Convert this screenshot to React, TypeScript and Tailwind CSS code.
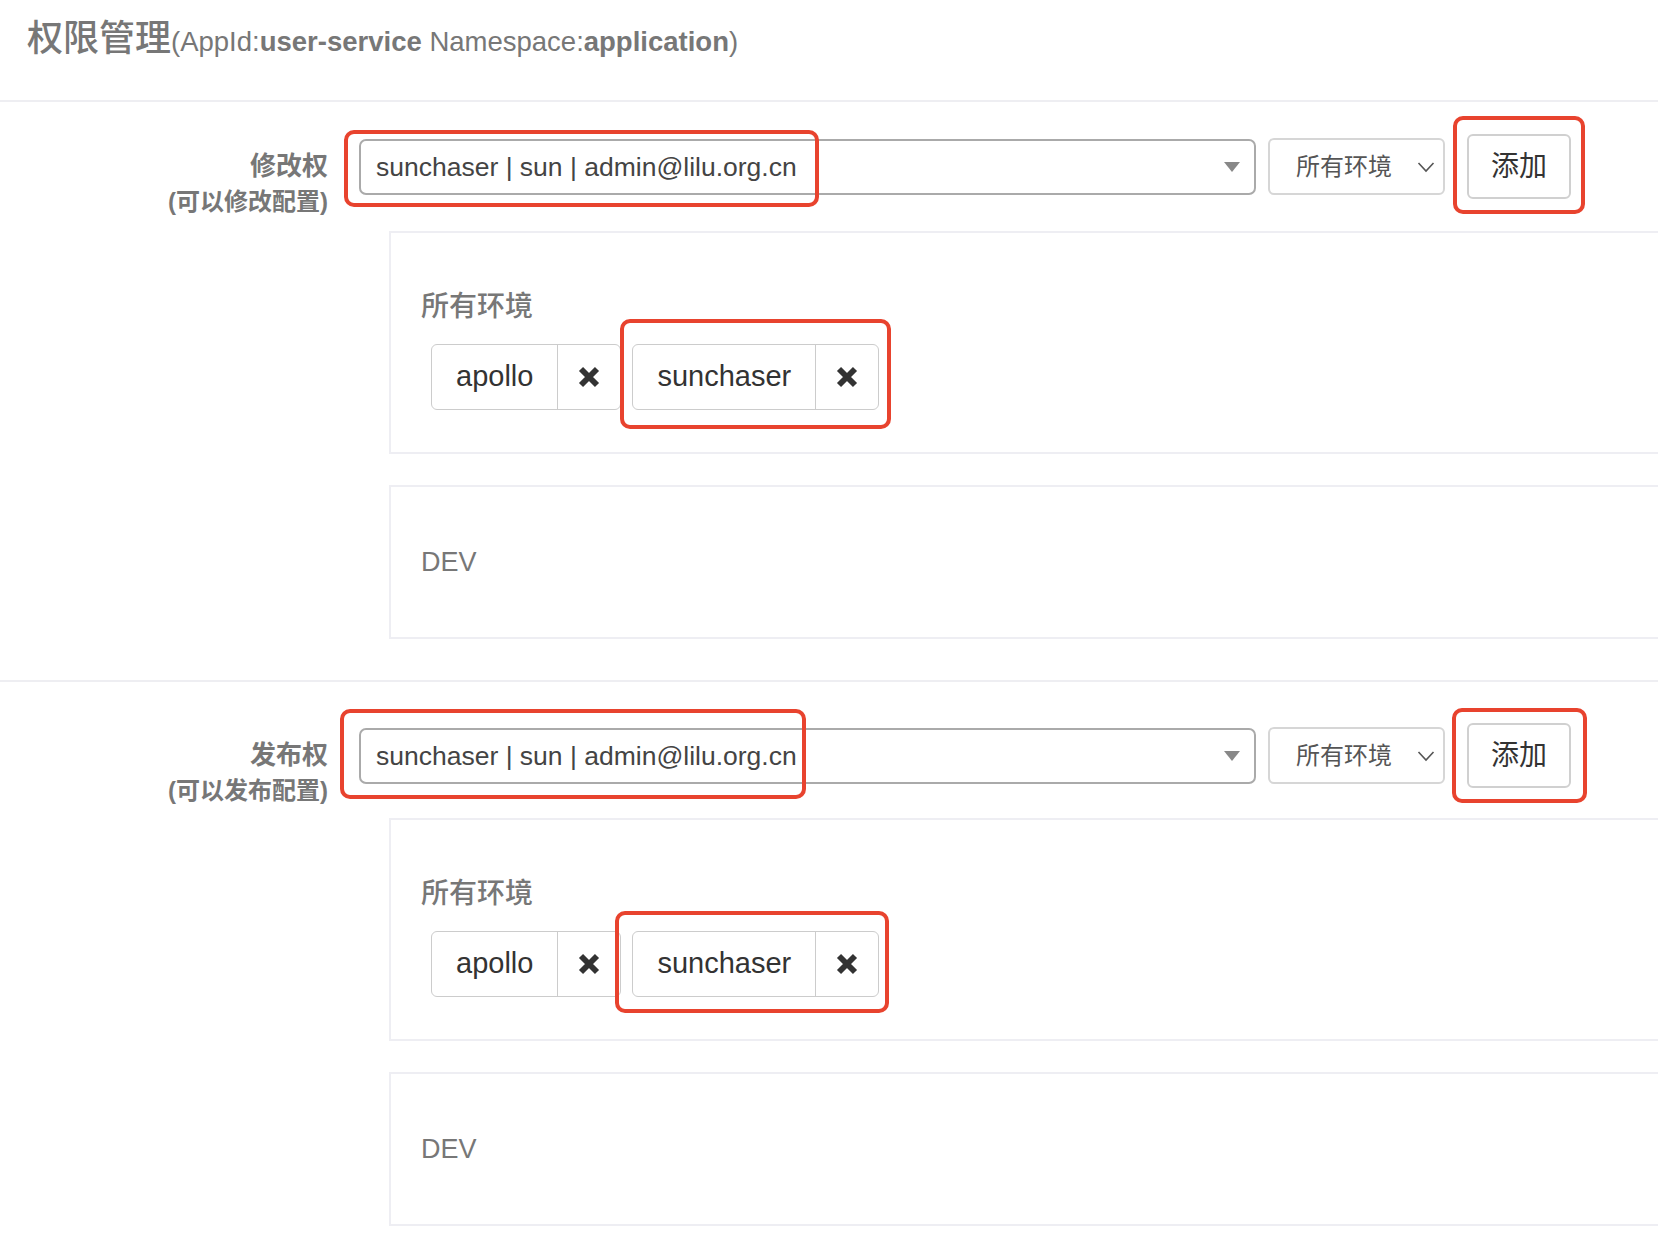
import React from "react";

const XIcon = () => (
  <svg width="24" height="24" viewBox="0 0 24 24">
    <path d="M4 4 L20 20 M20 4 L4 20" stroke="#333" strokeWidth="5.8" strokeLinecap="butt" fill="none" />
  </svg>
);

const Tag = ({ name, overlay }: { name: string; overlay?: string }) => (
  <div className="relative">
    <div className="flex h-[66px] rounded-[6px] border border-[#cccccc] bg-white">
      <span className="flex items-center px-[24px] text-[29px] text-[#333]">{name}</span>
      <span className="flex w-[63px] items-center justify-center border-l border-[#cccccc]">
        <XIcon />
      </span>
    </div>
    {overlay ? <div className={overlay} /> : null}
  </div>
);

type SectionProps = {
  title: string;
  sub: string;
  sectionCls: string;
  panelCls: string;
  selectOverlay: string;
  btnOverlay: string;
  tagOverlay: string;
};

const Section = ({ title, sub, sectionCls, panelCls, selectOverlay, btnOverlay, tagOverlay }: SectionProps) => (
  <section className={sectionCls}>
    <div className="flex h-[65px] items-center">
      <div className="mt-[14px] w-[328px] self-start text-right font-bold text-[#777]">
        <div className="text-[26px] leading-[36px]">{title}</div>
        <div className="text-[24px] leading-[36px]">{sub}</div>
      </div>
      <div className="relative ml-[31px] flex h-[56px] w-[897px] items-center rounded-[7px] border-2 border-[#aaaaaa] bg-white pl-[15px] pr-[14px]">
        <span className="flex-1 pt-[3px] text-[26.5px] text-[#444]">sunchaser | sun | admin@lilu.org.cn</span>
        <svg width="16" height="10" viewBox="0 0 16 10">
          <path d="M0 0 H16 L8 10 Z" fill="#888" />
        </svg>
        <div className={selectOverlay} />
      </div>
      <div className="ml-[12px] flex h-[57px] w-[177px] items-center rounded-[6px] border-2 border-[#d6d6d6] bg-white pl-[26px] pr-[8px]">
        <span className="flex-1 text-[24px] text-[#555]">所有环境</span>
        <svg width="18" height="12" viewBox="0 0 18 12">
          <path d="M1.5 2 L9 10 L16.5 2" stroke="#555" strokeWidth="1.6" fill="none" />
        </svg>
      </div>
      <div className="relative ml-[22px] flex h-[65px] w-[104px] items-center justify-center rounded-[6px] border-2 border-[#d0d0d0] bg-white text-[28px] text-[#333]">
        添加
        <div className={btnOverlay} />
      </div>
    </div>
    <div className={panelCls}>
      <div className="text-[28px] font-medium leading-[40px] text-[#777]">所有环境</div>
      <div className="ml-[10px] mt-[17px] flex gap-[11px]">
        <Tag name="apollo" />
        <Tag name="sunchaser" overlay={tagOverlay} />
      </div>
    </div>
    <div className="mr-[-10px] ml-[389px] mt-[31px] border-2 border-[#eeeef3] pb-[55px] pl-[30px] pt-[55px]">
      <div className="text-[27px] font-medium leading-[40px] text-[#777]">DEV</div>
    </div>
  </section>
);

export default function App() {
  return (
    <div className="h-[1238px] w-[1658px] overflow-hidden bg-white font-['Liberation_Sans','Noto_Sans_CJK_SC',sans-serif]">
      <div className="h-[102px] border-b-2 border-[#eeeef2] pl-[27px] pt-[16px]">
        <div className="leading-[46px] text-[#777]">
          <span className="text-[36px] font-medium">权限管理</span>
          <span className="text-[27.5px]">
            (AppId:<b>user-service</b> Namespace:<b>application</b>)
          </span>
        </div>
      </div>
      <Section
        title="修改权"
        sub="(可以修改配置)"
        sectionCls="border-b-2 border-[#eeeef2] pt-[32px] pb-[41px]"
        panelCls="mr-[-10px] ml-[389px] mt-[32px] border-2 border-[#eeeef3] pb-[42px] pl-[30px] pt-[54px]"
        selectOverlay="absolute left-[-17px] top-[-11px] h-[77px] w-[475px] rounded-[10px] border-[4px] border-[#e8432e]"
        btnOverlay="absolute left-[-16px] top-[-20px] h-[98px] w-[132px] rounded-[10px] border-[4px] border-[#e8432e]"
        tagOverlay="absolute left-[-12px] top-[-25px] h-[110px] w-[271px] rounded-[10px] border-[4px] border-[#e8432e]"
      />
      <Section
        title="发布权"
        sub="(可以发布配置)"
        sectionCls="pt-[41px]"
        panelCls="mr-[-10px] ml-[389px] mt-[30px] border-2 border-[#eeeef3] pb-[42px] pl-[30px] pt-[54px]"
        selectOverlay="absolute left-[-21px] top-[-21px] h-[90px] w-[466px] rounded-[10px] border-[4px] border-[#e8432e]"
        btnOverlay="absolute left-[-17px] top-[-17px] h-[95px] w-[135px] rounded-[10px] border-[4px] border-[#e8432e]"
        tagOverlay="absolute left-[-17px] top-[-20px] h-[102px] w-[274px] rounded-[10px] border-[4px] border-[#e8432e]"
      />
    </div>
  );
}
